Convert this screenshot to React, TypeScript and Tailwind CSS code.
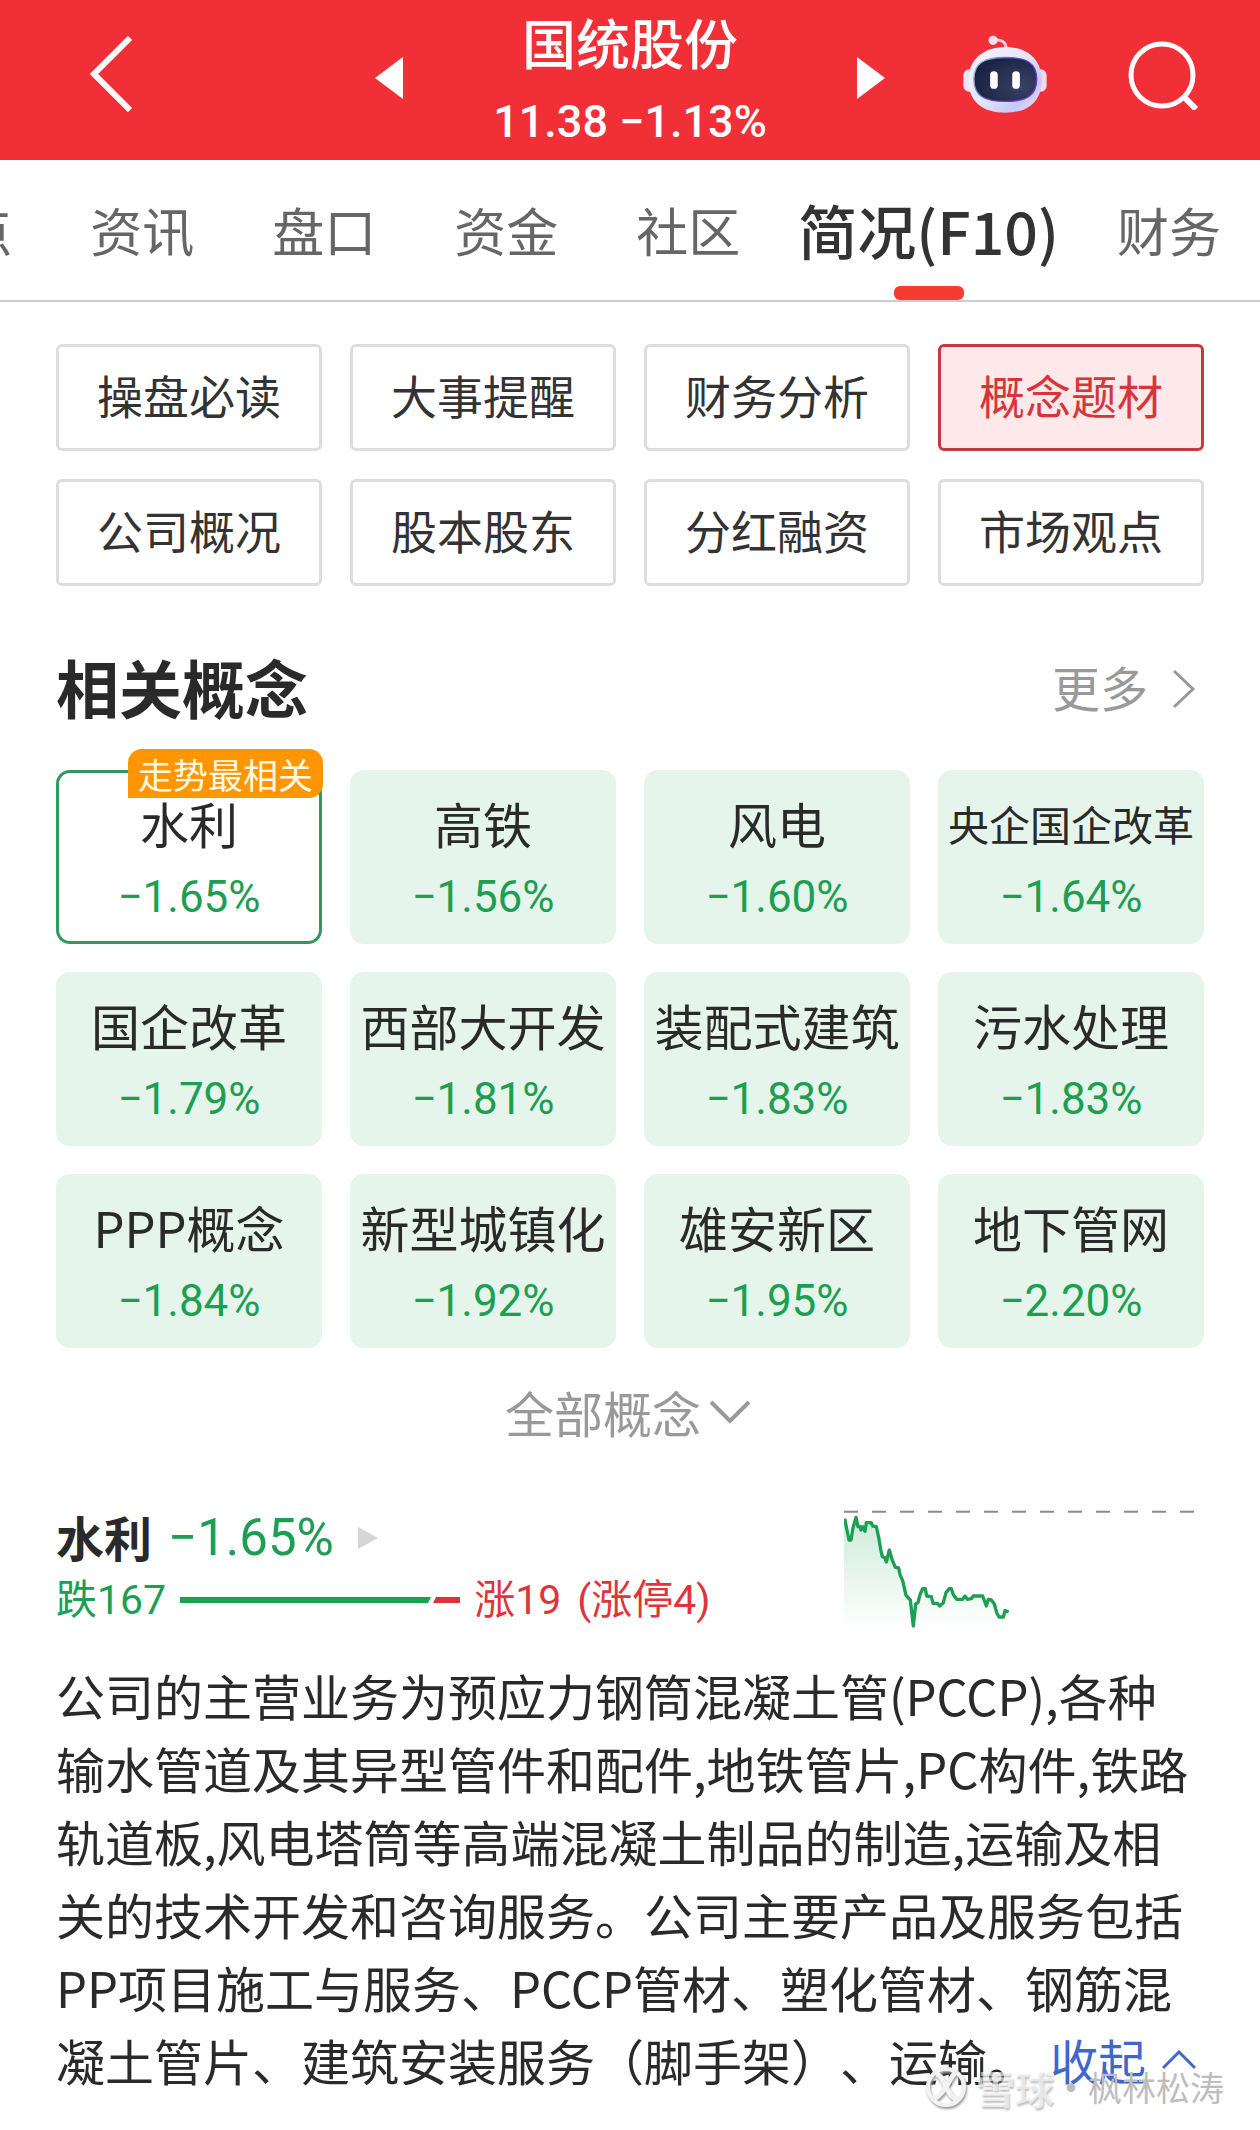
import React, { useState } from 'react'
import clsx from 'clsx'

const tabs = ['点', '资讯', '盘口', '资金', '社区', '简况(F10)', '财务']

const sections = [
  '操盘必读', '大事提醒', '财务分析', '概念题材',
  '公司概况', '股本股东', '分红融资', '市场观点',
]

const concepts = [
  { name: '水利', change: '−1.65%', badge: '走势最相关' },
  { name: '高铁', change: '−1.56%' },
  { name: '风电', change: '−1.60%' },
  { name: '央企国企改革', change: '−1.64%' },
  { name: '国企改革', change: '−1.79%' },
  { name: '西部大开发', change: '−1.81%' },
  { name: '装配式建筑', change: '−1.83%' },
  { name: '污水处理', change: '−1.83%' },
  { name: 'PPP概念', change: '−1.84%' },
  { name: '新型城镇化', change: '−1.92%' },
  { name: '雄安新区', change: '−1.95%' },
  { name: '地下管网', change: '−2.20%' },
]

function RobotIcon() {
  return (
    <svg width="84" height="78" viewBox="98 42 254 236" fill="none" aria-hidden="true">
      <defs>
        <linearGradient id="shell" x1="120" y1="80" x2="320" y2="275" gradientUnits="userSpaceOnUse">
          <stop offset="0" stopColor="#fdf3fa" />
          <stop offset="0.5" stopColor="#e4e6fb" />
          <stop offset="0.8" stopColor="#c3c8f7" />
          <stop offset="1" stopColor="#f4dcf0" />
        </linearGradient>
        <linearGradient id="rim" x1="130" y1="110" x2="320" y2="245" gradientUnits="userSpaceOnUse">
          <stop offset="0" stopColor="#8fd6e6" />
          <stop offset="0.5" stopColor="#5a3fc0" />
          <stop offset="1" stopColor="#7a35d8" />
        </linearGradient>
        <radialGradient id="visor" cx="0.75" cy="0.65" r="0.8">
          <stop offset="0" stopColor="#3a4265" />
          <stop offset="1" stopColor="#17203f" />
        </radialGradient>
      </defs>
      <path d="M190 58 C212 54 228 62 228 82" stroke="#f7cdd8" strokeWidth="9" />
      <circle cx="189" cy="58" r="14" fill="#fbdfe8" />
      <rect x="99" y="146" width="40" height="68" rx="18" fill="#efe3f8" />
      <rect x="311" y="146" width="40" height="68" rx="18" fill="#f3d9ee" />
      <path
        d="M226 78 C296 78 336 120 336 178 C336 242 296 277 226 277 C156 277 114 242 114 178 C114 120 156 78 226 78Z"
        fill="url(#shell)"
      />
      <path
        d="M226 110 C290 110 321 126 321 176 C321 226 290 243 226 243 C162 243 131 226 131 176 C131 126 162 110 226 110Z"
        fill="url(#visor)"
        stroke="url(#rim)"
        strokeWidth="4"
      />
      <rect x="180" y="152" width="23" height="53" rx="11" fill="#fff" />
      <rect x="247" y="152" width="23" height="53" rx="11" fill="#fff" />
    </svg>
  )
}

function Header() {
  return (
    <header className="grid h-40 grid-cols-[1fr_510px_1fr] grid-rows-1 bg-[#f12f37] text-white">
      <div className="flex items-center pb-3 pl-[88px]">
        <button type="button" aria-label="返回">
          <svg width="46" height="76" viewBox="0 0 46 76" fill="none" stroke="currentColor" strokeWidth="6" aria-hidden="true">
            <path d="M42 2 L6 38 L42 74" />
          </svg>
        </button>
      </div>

      <div className="flex justify-between">
        <button type="button" aria-label="上一只" className="pb-1">
          <svg width="28" height="42" viewBox="0 0 28 42" fill="currentColor" aria-hidden="true">
            <path d="M28 0 V42 L0 21Z" />
          </svg>
        </button>
        <div className="text-center font-medium">
          <h1 className="pt-1 text-[54px] leading-[76px]">国统股份</h1>
          <p className="font-[Roboto] text-[45px] leading-[84px]">11.38 −1.13%</p>
        </div>
        <button type="button" aria-label="下一只" className="pb-1">
          <svg width="28" height="42" viewBox="0 0 28 42" fill="currentColor" aria-hidden="true">
            <path d="M0 0 V42 L28 21Z" />
          </svg>
        </button>
      </div>

      <div className="flex items-center justify-end gap-20 pr-[61px] pb-3">
        <button type="button" aria-label="智能助手">
          <RobotIcon />
        </button>
        <button type="button" aria-label="搜索">
          <svg width="72" height="72" viewBox="0 0 72 72" fill="none" stroke="currentColor" strokeWidth="5" aria-hidden="true">
            <circle cx="35" cy="37" r="31" />
            <path d="M56 58 L69 71" strokeWidth="6" />
          </svg>
        </button>
      </div>
    </header>
  )
}

function Trend() {
  return (
    <svg width="350" height="122" viewBox="132 90 1050 366" fill="none" aria-hidden="true" className="mt-1">
      <defs>
        <linearGradient id="fall" x1="0" y1="110" x2="0" y2="456" gradientUnits="userSpaceOnUse">
          <stop offset="0" stopColor="#1aa354" stopOpacity="0.22" />
          <stop offset="1" stopColor="#1aa354" stopOpacity="0" />
        </linearGradient>
      </defs>
      <path d="M132 101 H1182" stroke="#8a8a8a" strokeWidth="6" strokeDasharray="42 42" />
      <path
        d="M132 124 L147 188 L153 186 L168 120 L174 146 L184 152 L194 152 L200 134 L214 134 L230 146 L246 230 L258 248 L268 216 L280 250 L296 270 L308 306 L318 352 L332 368 L340 440 L346 378 L356 368 L368 332 L376 332 L382 354 L394 356 L400 376 L418 384 L430 374 L440 344 L450 332 L468 362 L488 364 L495 354 L502 364 L520 354 L548 354 L560 384 L566 364 L578 370 L594 416 L610 416 L616 398 L624 402 V456 H132Z"
        fill="url(#fall)"
      />
      <path
        d="M134 122 L138 142 L147 186 L153 186 L159 150 L168 118 L174 146 L180 146 L183 156 L188 146 L195 160 L199 134 L214 134 L218 144 L229 146 L236 178 L242 214 L247 236 L254 238 L259 252 L268 216 L276 244 L286 268 L296 270 L300 290 L308 308 L318 352 L331 366 L340 444 L347 378 L354 374 L360 350 L368 332 L376 332 L380 354 L394 356 L399 376 L412 376 L419 384 L430 374 L438 344 L448 332 L454 332 L460 350 L470 364 L488 364 L495 354 L502 364 L514 362 L520 354 L548 354 L559 384 L565 364 L574 366 L583 378 L590 404 L597 417 L610 417 L615 398 L626 402"
        stroke="#1c9f52"
        strokeWidth="10"
        strokeLinejoin="round"
      />
    </svg>
  )
}

function Watermark() {
  return (
    <div className="pointer-events-none absolute right-9 bottom-[18px] flex items-center text-[#bdbdbd]">
      <svg width="44" height="44" viewBox="0 0 44 44" fill="none" aria-hidden="true" className="mr-2 drop-shadow-[1px_2px_1px_#999]">
        <circle cx="22" cy="22" r="18" stroke="#f2f2f2" strokeWidth="4" />
        <path d="M12 9 C18 10 19 17 22 22 C25 27 27 33 34 35 M31 8 C26 13 25 18 22 22 C18 27 16 32 9 34" stroke="#f2f2f2" strokeWidth="5" />
      </svg>
      <span className="text-[39px] leading-[50px] font-bold text-white/60 [text-shadow:1px_2px_2px_#8888]">雪球</span>
      <span className="text-[34px] leading-[50px] font-bold">·</span>
      <span className="text-[34px] leading-[50px]">枫林松涛</span>
    </div>
  )
}

export default function App() {
  const [tab, setTab] = useState('简况(F10)')
  const [section, setSection] = useState('概念题材')
  const [concept, setConcept] = useState('水利')

  return (
    <div className="relative overflow-hidden bg-white pb-[34px] font-['Noto_Sans_CJK_SC',sans-serif] text-[#2a2a2a]">
      <Header />

      <nav className="flex h-[142px] justify-end overflow-hidden border-b-2 border-[#cccccc]">
        {tabs.map((item) => (
          <button
            key={item}
            type="button"
            onClick={() => setTab(item)}
            className={clsx(
              'relative shrink-0 whitespace-nowrap',
              item === tab ? 'px-[19px] text-[59px] font-medium text-[#333333]' : 'px-[39px] text-[52px] text-[#666666]',
            )}
          >
            {item}
            {item === tab && (
              <span className="absolute bottom-0 left-1/2 h-[14px] w-[70px] -translate-x-1/2 rounded-md bg-[#f63b30]" />
            )}
          </button>
        ))}
      </nav>

      <main className="px-14">
        <div className="mt-[42px] grid grid-cols-4 gap-7">
          {sections.map((item) => (
            <button
              key={item}
              type="button"
              onClick={() => setSection(item)}
              className={clsx(
                'h-[107px] rounded-md border-[3px] pb-2 text-[46px] leading-[60px] whitespace-nowrap',
                item === section ? 'border-[#c23a42] bg-[#fde9ea] text-[#d8343a]' : 'border-[#dddddd] text-[#333333]',
              )}
            >
              {item}
            </button>
          ))}
        </div>

        <div className="mt-14 flex items-center justify-between">
          <h2 className="text-[63px] leading-[88px] font-bold">相关概念</h2>
          <a href="#more" className="flex items-center gap-6 pr-2 text-[48px] leading-[60px] text-[#999999]">
            更多
            <svg width="24" height="46" viewBox="0 -6 24 46" fill="none" stroke="currentColor" strokeWidth="3" aria-hidden="true">
              <path d="M2 2 L21 20 L2 38" />
            </svg>
          </a>
        </div>

        <div className="mt-10 grid grid-cols-4 gap-7">
          {concepts.map((item) => (
            <button
              key={item.name}
              type="button"
              onClick={() => setConcept(item.name)}
              className={clsx(
                'relative flex h-[174px] flex-col items-center rounded-[14px] border-[3px] pt-[14px] whitespace-nowrap',
                item.name === concept ? 'border-[#2f9a5c] bg-white' : 'border-[#e6f5eb] bg-[#e6f5eb]',
              )}
            >
              <span className={clsx('leading-[72px]', item.name.length > 5 ? 'text-[41px]' : 'text-[49px]')}>
                {item.name}
              </span>
              <span className="font-[Roboto] text-[44px] leading-[76px] text-[#1c9f52]">{item.change}</span>
              {item.badge && (
                <span className="absolute -top-6 -right-1 rounded-[14px] rounded-bl-none bg-[#ff9500] px-[10px] text-[35px] leading-[49px] text-[#fffbe6]">
                  {item.badge}
                </span>
              )}
            </button>
          ))}
        </div>

        <button type="button" className="mx-auto mt-7 flex items-center gap-2 pr-1 text-[49px] leading-[72px] text-[#999999]">
          全部概念
          <svg width="42" height="26" viewBox="0 0 42 26" fill="none" stroke="currentColor" strokeWidth="4" aria-hidden="true">
            <path d="M2 3 L21 22 L40 3" />
          </svg>
        </button>

        <section className="mt-14">
          <div className="flex items-start justify-between pr-[10px]">
            <div>
              <h3 className="flex h-16 items-center">
                <span className="text-[48px] leading-[64px] font-bold">水利</span>
                <span className="ml-4 pt-1 font-[Roboto] text-[51px] leading-[64px] text-[#1c9f52]">−1.65%</span>
                <svg width="20" height="26" viewBox="0 -4 20 26" fill="#d6d6d6" className="ml-6" aria-hidden="true">
                  <path d="M0 0 L20 11 L0 22Z" />
                </svg>
              </h3>
              <p className="flex items-center font-['Roboto','Noto_Sans_CJK_SC',sans-serif] text-[41px] leading-[64px] text-[#e0343c]">
                <span className="text-[#1c9f52]">跌167</span>
                <svg width="280" height="6" viewBox="0 0 280 6" className="mx-[14px]" aria-hidden="true">
                  <path d="M0 0 H251 L248 6 H0Z" fill="#17a44f" />
                  <path d="M256 0 H280 V6 H253Z" fill="#e0303a" />
                </svg>
                <span>涨19</span>
                <span className="ml-4">(涨停4)</span>
              </p>
            </div>
            <Trend />
          </div>

          <div className="relative mt-[26px]">
            <p className="text-[49px] leading-[73px] [text-spacing-trim:space-all]">
              公司的主营业务为预应力钢筒混凝土管(PCCP),各种输水管道及其异型管件和配件,地铁管片,PC构件,铁路轨道板,风电塔筒等高端混凝土制品的制造,运输及相关的技术开发和咨询服务。公司主要产品及服务包括PP项目施工与服务、PCCP管材、塑化管材、钢筋混凝土管片、建筑安装服务（脚手架）、运输。
            </p>
            <button type="button" className="absolute right-2 bottom-0 flex items-center gap-4 text-[48px] leading-[73px] text-[#4166cc]">
              收起
              <svg width="34" height="20" viewBox="0 0 34 20" fill="none" stroke="currentColor" strokeWidth="3" aria-hidden="true">
                <path d="M1 18 L17 2 L33 18" />
              </svg>
            </button>
          </div>
        </section>
      </main>

      <Watermark />
    </div>
  )
}
